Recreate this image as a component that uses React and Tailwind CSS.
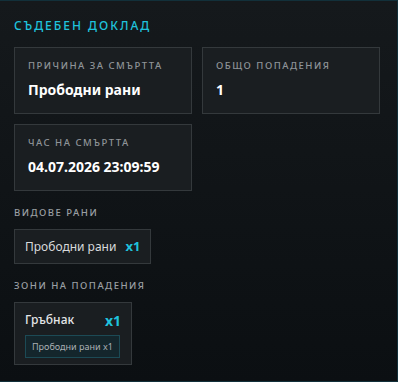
export default function App() {
  return (
    <div
      className="w-[398px] h-[382px] bg-gradient-to-b from-[#15191c] to-[#0b0f12] border-t border-b border-r border-[#12303a] overflow-hidden"
      style={{ fontFamily: '"Noto Sans", "Open Sans", sans-serif' }}
    >
      <div className="px-[14px] pt-[15px]">
        {/* Title */}
        <h2 className="text-[12px] leading-5 tracking-[2px] text-[#1fc3dd] font-medium">
          СЪДЕБЕН ДОКЛАД
        </h2>

        {/* Info cards */}
        <div className="grid grid-cols-[178px_178px] gap-[10px] mt-[11px]">
          <InfoCard label="ПРИЧИНА ЗА СМЪРТТА" value="Прободни рани" />
          <InfoCard label="ОБЩО ПОПАДЕНИЯ" value="1" />
          <InfoCard label="ЧАС НА СМЪРТТА" value="04.07.2026 23:09:59" />
        </div>

        {/* Wound types */}
        <p className="mt-[14px] text-[9.5px] leading-4 tracking-[1.5px] text-[#9a9fa3] font-medium">
          ВИДОВЕ РАНИ
        </p>
        <div className="mt-[8px] flex">
          <div className="flex items-center gap-[9px] h-[35px] px-[10px] bg-[#1a1e21] border border-[#34393c]">
            <span className="text-[12px] text-[#d8dadc]">Прободни рани</span>
            <span className="text-[13px] font-bold text-[#1fc3dd]">x1</span>
          </div>
        </div>

        {/* Hit zones */}
        <p className="mt-[14px] text-[9.5px] leading-4 tracking-[1.5px] text-[#9a9fa3] font-medium">
          ЗОНИ НА ПОПАДЕНИЯ
        </p>
        <div className="mt-[8px] flex">
          <div className="w-[118px] h-[63px] pt-[8px] px-[10px] bg-[#1a1e21] border border-[#34393c]">
            <div className="flex items-center justify-between h-[18px]">
              <span className="text-[12px] font-medium text-[#e4e6e8]">Гръбнак</span>
              <span className="text-[14px] font-bold text-[#1fc3dd]">x1</span>
            </div>
            <div className="mt-[6px] flex">
              <span className="whitespace-nowrap px-[6px] h-[23px] flex items-center bg-[#14262c] border border-[#1c4a55] text-[9px] text-[#aab0b4]">
                Прободни рани x1
              </span>
            </div>
          </div>
        </div>
      </div>
    </div>
  );
}

function InfoCard({ label, value }) {
  return (
    <div className="h-[67px] bg-[#1a1e21] border border-[#34393c] px-[13px] pt-[10px]">
      <p className="text-[9.5px] leading-4 tracking-[1.5px] text-[#8f9498] font-medium">
        {label}
      </p>
      <p className="mt-[6px] text-[14px] leading-5 font-bold text-white">
        {value}
      </p>
    </div>
  );
}
